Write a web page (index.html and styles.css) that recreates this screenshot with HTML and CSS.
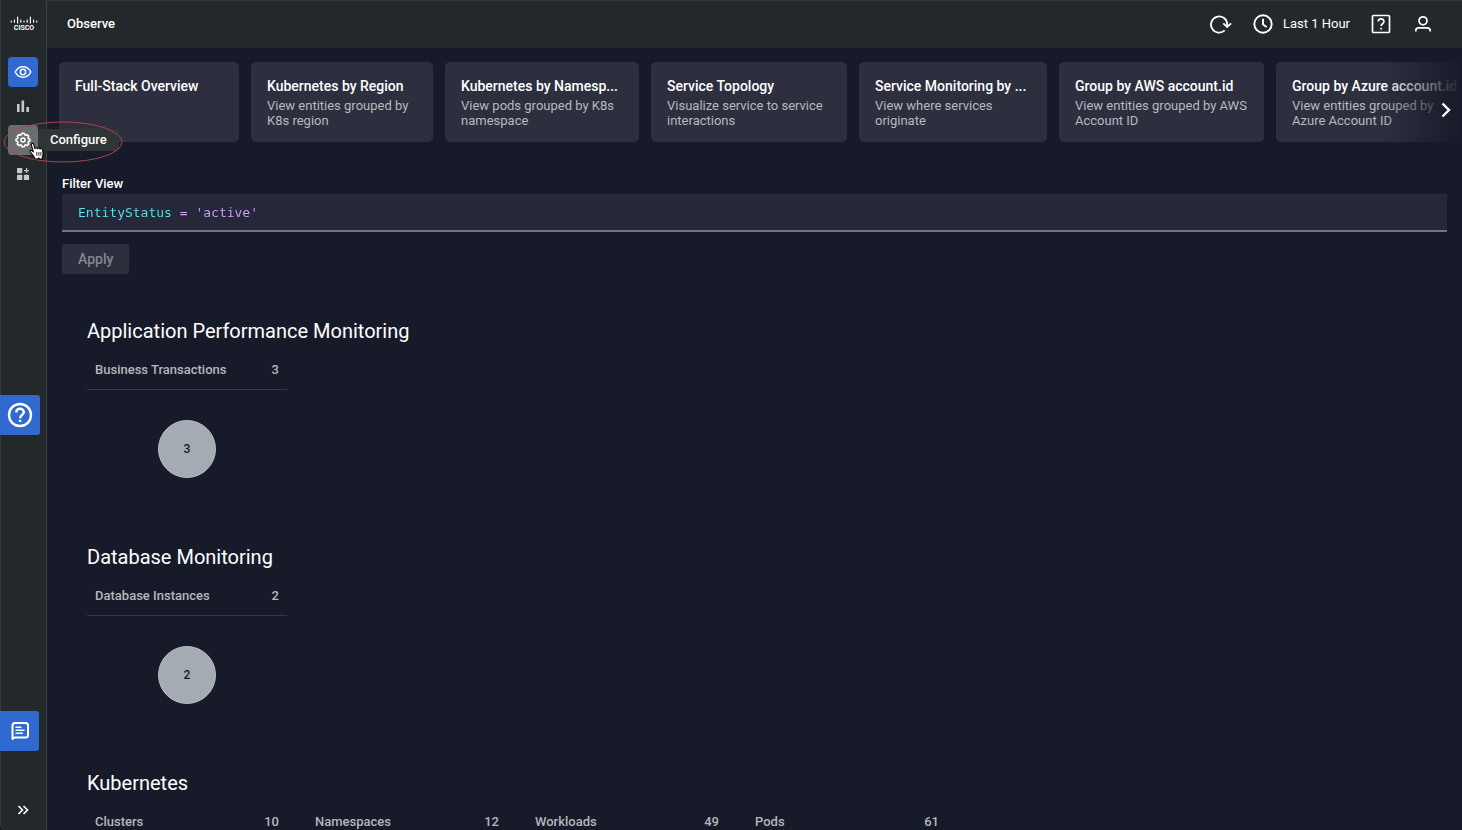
FILE: index.html
```html
<!DOCTYPE html>
<html lang="en">
<head>
<meta charset="utf-8">
<title>Observe</title>
<link rel="stylesheet" href="styles.css">
</head>
<body>
<div class="app">
  <aside class="sidebar">
    <div class="logo">
      <svg width="28" height="9" viewBox="0 0 28 9" aria-hidden="true"><path d="M1.200 5v1M4.400 4v2.200M7.600 1.200v5.800M10.800 4v2.200M14 5v1M17.200 4v2.200M20.400 1.200v5.800M23.600 4v2.200M26.800 5v1" stroke="#fff" stroke-width="1.200" stroke-linecap="round"/></svg>
      <span>CISCO</span>
    </div>
    <nav class="nav" aria-label="Main">
      <a class="nav-item active" href="#observe" aria-label="Observe"><svg width="18" height="18" viewBox="0 0 18 18" fill="none" stroke="#fff" stroke-width="1.500"><path d="M1.200 9C3 5.500 5.700 3.800 9 3.800S15 5.500 16.800 9C15 12.500 12.300 14.200 9 14.200S3 12.500 1.200 9Z"/><circle cx="9" cy="9" r="2.700"/></svg></a>
      <a class="nav-item" href="#dashboards" aria-label="Dashboards"><svg width="18" height="18" viewBox="0 0 18 18" fill="#c6c8ca"><path d="M3 7h2.600v8H3zM7.500 3.500h2.600V15H7.500zM12.400 10h2.600v5h-2.600z"/></svg></a>
      <a class="nav-item hover" href="#configure" aria-label="Configure"><svg width="18" height="18" viewBox="0 0 18 18" fill="none" stroke="#fff" stroke-width="1.500" stroke-linejoin="round"><path d="M7.800 2.300h2.400l.4 1.500 1.200.5 1.300-.8 1.700 1.700-.8 1.300.5 1.200 1.500.4v1.900l-1.500.4-.5 1.200.8 1.300-1.700 1.700-1.300-.8-1.200.5-.4 1.400H7.800l-.4-1.400-1.200-.5-1.300.8-1.700-1.700.8-1.300-.5-1.200L2 10V8.100l1.500-.4.5-1.200-.8-1.300 1.700-1.700 1.300.8 1.200-.5Z"/><circle cx="9" cy="9" r="2"/></svg></a>
      <a class="nav-item" href="#extend" aria-label="Extensions"><svg width="18" height="18" viewBox="0 0 18 18" fill="#c6c8ca"><rect x="3" y="3" width="5.300" height="5.300" rx=".7"/><rect x="3" y="9.800" width="5.300" height="5.300" rx=".7"/><rect x="9.800" y="9.800" width="5.300" height="5.300" rx=".7"/><path d="M12 3h1.200v2H15v1.200h-1.800V8H12V6.200h-2V5h2z"/></svg></a>
    </nav>
    <button class="expand" type="button" aria-label="Expand menu"><svg width="12" height="10" viewBox="0 0 12 10" fill="none" stroke="#fff" stroke-width="1.600"><path d="m1.500 1 4 4-4 4M6.500 1l4 4-4 4"/></svg></button>
  </aside>

  <header class="topbar">
    <h1 class="page-title">Observe</h1>
    <div class="tools">
      <button class="tool" type="button" aria-label="Refresh"><svg width="22" height="20" viewBox="0 0 22 20" fill="none" stroke="#fff" stroke-width="1.800"><path d="M14.700 16.400A8.100 8.100 0 1 1 17.200 10v2.600M13.300 9.300l3.900 3.700 3.900-3.700"/></svg></button>
      <button class="tool time" type="button"><svg width="20" height="20" viewBox="0 0 20 20" fill="none" stroke="#fff" stroke-width="1.900"><circle cx="10" cy="10" r="8.700"/><path d="M10 4.800V10.500l3.700 2.500"/></svg><span>Last 1 Hour</span></button>
      <button class="tool" type="button" aria-label="Help"><svg width="20" height="20" viewBox="0 0 20 20" fill="none" stroke="#fff" stroke-width="1.700"><rect x="1.500" y="1.500" width="17" height="17" rx="1"/><path d="M7.200 7.500c0-3.600 5.700-3.600 5.700 0 0 2.200-2.800 2.300-2.800 4.600M10.100 13.700v1.800"/></svg></button>
      <button class="tool" type="button" aria-label="Account"><svg width="20" height="20" viewBox="0 0 20 20" fill="none" stroke="#fff" stroke-width="1.700"><circle cx="10" cy="6.800" r="4"/><path d="M2.800 17.500v-.8c0-1.800 1-2.900 2.900-2.900h8.600c1.900 0 2.900 1.100 2.900 2.900v.8"/></svg></button>
    </div>
  </header>

  <main class="content">
    <div class="carousel">
      <div class="cards">
        <a class="card w1" href="#full-stack"><h2>Full-Stack Overview</h2></a>
        <a class="card w2" href="#region"><h2>Kubernetes by Region</h2><p>View entities grouped by K8s region</p></a>
        <a class="card w3" href="#namespace"><h2>Kubernetes by Namesp...</h2><p>View pods grouped by K8s namespace</p></a>
        <a class="card w4" href="#topology"><h2>Service Topology</h2><p>Visualize service to service interactions</p></a>
        <a class="card w5" href="#service"><h2>Service Monitoring by ...</h2><p>View where services originate</p></a>
        <a class="card w6" href="#aws"><h2>Group by AWS account.id</h2><p>View entities grouped by AWS Account ID</p></a>
        <a class="card w7" href="#azure"><h2>Group by Azure account.id</h2><p>View entities grouped by Azure Account ID</p></a>
      </div>
      <button class="next" type="button" aria-label="Next views"><svg width="10" height="16" viewBox="0 0 10 16" fill="none" stroke="#fff" stroke-width="2.400"><path d="m1.500 1.500 6.500 6.500-6.500 6.500"/></svg></button>
    </div>

    <form class="filter">
      <label for="query">Filter View</label>
      <div class="query-box"><input id="query" class="query" type="text" value="EntityStatus = 'active'" spellcheck="false"></div>
      <button class="apply" type="button" disabled>Apply</button>
    </form>

    <div class="domains">
      <section class="domain">
        <h2>Application Performance Monitoring</h2>
        <div class="entities">
          <div class="entity"><a class="entity-head" href="#bt"><span>Business Transactions</span><span>3</span></a><div class="bubble">3</div></div>
        </div>
      </section>
      <section class="domain">
        <h2>Database Monitoring</h2>
        <div class="entities">
          <div class="entity"><a class="entity-head" href="#db"><span>Database Instances</span><span>2</span></a><div class="bubble">2</div></div>
        </div>
      </section>
      <section class="domain">
        <h2>Kubernetes</h2>
        <div class="entities">
          <div class="entity"><a class="entity-head" href="#clusters"><span>Clusters</span><span>10</span></a></div>
          <div class="entity"><a class="entity-head" href="#namespaces"><span>Namespaces</span><span>12</span></a></div>
          <div class="entity"><a class="entity-head" href="#workloads"><span>Workloads</span><span>49</span></a></div>
          <div class="entity"><a class="entity-head" href="#pods"><span>Pods</span><span>61</span></a></div>
        </div>
      </section>
    </div>
  </main>
</div>

<button class="float help" type="button" aria-label="Help center"><svg width="26" height="26" viewBox="0 0 26 26" fill="none" stroke="#fff" stroke-width="2.400"><circle cx="13" cy="13" r="11"/><path d="M9.300 10.400c0-4.900 7.500-4.700 7.500-.2 0 2.700-3.700 2.800-3.700 6M13.100 17.700v2.300"/></svg></button>
<button class="float chat" type="button" aria-label="Feedback"><svg width="20" height="20" viewBox="0 0 20 20" fill="none" stroke="#fff" stroke-width="2"><path d="M2.500 18V4.500q0-2.500 2.500-2.500h10.500q2.500 0 2.500 2.500v9.500q0 2.500-2.500 2.500H4.500z" stroke-linejoin="round"/><path d="M5.500 6.300h6M5.500 9.300h9M5.500 12.300h7.500" stroke-width="1.400"/></svg></button>
<div class="tooltip" role="tooltip">Configure</div>
<svg class="highlight" viewBox="0 0 120 42" fill="none" stroke="#a8474b" stroke-width="1"><ellipse cx="60" cy="21" rx="59" ry="20"/></svg>
<svg class="pointer" viewBox="0 0 15 17" fill="#fff" stroke="#000" stroke-width="1" stroke-linejoin="round"><path d="M5.500 15.800c-.6-1.700-1.300-2.900-2.700-4.400C1.500 10 .5 8.900 1 8.200c.7-.8 2 .1 3 1.200L2.200 2.700C1.800 1.300 3.700.6 4.300 2l1.300 4.400c.2-1.200 2-1.300 2.300-.1.400-1.100 2-1 2.400.3.600-.8 2.100-.7 2.400.8.700 2.900.9 5-.2 6.700v1.900H9.900l-.7-1-1 1z"/><path d="M7.300 9.500v3.500M9.300 9.500v3.500M11.200 9.500v3.500" stroke-width=".8"/></svg>
</body>
</html>
```
FILE: styles.css
```css
* { box-sizing: border-box; }
body { margin: 0; height: 100vh; overflow: hidden; background: #171a29; color: #fff; font: 13px/20px Roboto, sans-serif; }
h1, h2, p { margin: 0; }
a { color: inherit; text-decoration: none; }
button { border: 0; padding: 0; background: none; color: inherit; font: inherit; cursor: pointer; }
svg { display: block; flex: none; }

.app { height: 100vh; display: grid; grid-template: 48px minmax(0, 1fr) / 47px minmax(0, 1fr); overflow: hidden; }
.sidebar { grid-row: 1 / 3; display: flex; flex-direction: column; align-items: center; background: #23282b; border-right: 1px solid #3b4044; border-bottom-left-radius: 6px; box-shadow: inset 1px 0 #34393c; padding: 16px 0 15px; }
.logo { display: flex; flex-direction: column; align-items: center; font-size: 7px; line-height: 7px; font-weight: 700; padding: 0 0 0 2px; }
.nav { display: flex; flex-direction: column; gap: 4px; margin-top: 25px; }
.nav-item { width: 30px; height: 30px; border-radius: 4px; display: flex; align-items: center; justify-content: center; }
.active { background: #3069d0; }
.hover { background: #6b6e70; }
.expand { margin-top: auto; }

.topbar { display: flex; align-items: center; justify-content: space-between; background: #23282b; box-shadow: inset 0 1px #34393c; padding: 0 29px 0 20px; }
.page-title { font-size: 13px; line-height: 20px; font-weight: 500; }
.tools { display: flex; align-items: center; gap: 21px; }
.time { display: flex; align-items: center; gap: 10px; }
.tool + .tool:last-child { margin-left: 1px; }

.content { overflow: hidden; }
.carousel { position: relative; padding: 14px 0 0 12px; overflow: hidden; }
.cards { display: flex; gap: 12px; }
.card { flex: none; height: 80px; padding: 16px; border-radius: 5px; background: #2d2f3e; }
.card h2 { font-size: 14px; line-height: 16px; font-weight: 500; white-space: nowrap; }
.card p { margin-top: 4px; font-size: 13px; line-height: 15px; color: #b8b9bf; }
.w1 { width: 180px; }
.w2 { width: 182px; }
.w3 { width: 194px; }
.w4 { width: 196px; }
.w5 { width: 188px; }
.w6 { width: 205px; }
.w7 { width: 205px; }
.next { position: absolute; top: 14px; right: 0; width: 80px; height: 80px; display: flex; align-items: center; justify-content: flex-end; padding: 16px 11px 0 0; background: linear-gradient(90deg, #171a2900, #171a29); }

.filter { display: flex; flex-direction: column; align-items: flex-start; padding: 32px 15px 0; }
.filter label { font-weight: 500; }
.query-box { align-self: stretch; background: #252838; border-bottom: 2px solid #727480; }
.query { display: block; width: 100%; height: 36px; border: 0; outline: 0; padding: 0 16px; font: 13px/20px "DejaVu Sans Mono", monospace; color: #c79bf2; -webkit-text-fill-color: transparent; caret-color: #fff; background: linear-gradient(90deg, #5ae2ee 112px, #cf9ffb 112px); -webkit-background-clip: text; background-clip: text; }
.apply { margin-top: 12px; height: 30px; padding: 0 16px; border-radius: 3px; background: #2d2f3e; color: #85868f; font-size: 14px; font-weight: 500; }

.domains { padding: 45px 40px 0; }
.domain { min-height: 226px; }
.domain h2 { font-size: 20px; line-height: 24px; font-weight: 400; }
.entities { display: flex; gap: 20px; margin-top: 17px; }
.entity { width: 200px; display: flex; flex-direction: column; align-items: center; gap: 30px; }
.entity-head { align-self: stretch; display: flex; justify-content: space-between; padding: 0 8px 9px; border-bottom: 1px solid #343746; font-weight: 500; color: #b5b7bd; }
.bubble { width: 58px; height: 58px; border: 1px solid #b6bbc3; border-radius: 50%; background: #a5abb3; color: #171a29; font-size: 12px; font-weight: 500; display: flex; align-items: center; justify-content: center; }

.float { position: fixed; left: 0; height: 40px; display: flex; align-items: center; justify-content: center; background: #3069d0; border-radius: 0 3px 3px 0; }
.help { top: 395px; width: 40px; }
.chat { bottom: 79px; width: 39px; }
.tooltip { position: fixed; left: 38px; top: 129px; padding: 1px 12px; border-radius: 3px; background: #303638; font-weight: 500; }
.highlight { position: fixed; left: 3px; top: 121px; width: 120px; height: 42px; pointer-events: none; }
.pointer { position: fixed; left: 29px; top: 142px; width: 16px; height: 18px; pointer-events: none; }
```
